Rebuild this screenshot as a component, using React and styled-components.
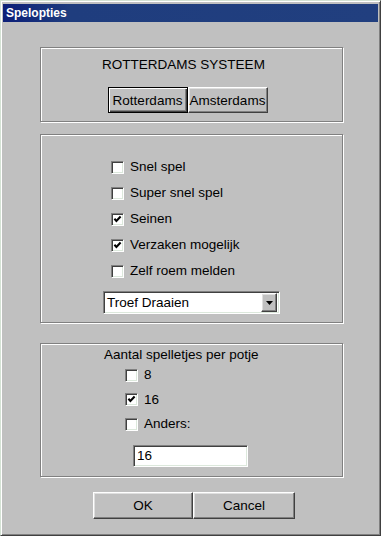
import styled, { createGlobalStyle, css } from "styled-components"

const GlobalStyle = createGlobalStyle`
    html, body {
        margin: 0;
        padding: 0;
        background: #c0c0c0;
    }
    * {
        box-sizing: border-box;
    }
`

const raised = css`
    border: 1px solid;
    border-color: #ffffff #404040 #404040 #ffffff;
    box-shadow: inset -1px -1px 0 #808080, inset 1px 1px 0 #dfdfdf;
`

const sunken = css`
    border: 1px solid;
    border-color: #808080 #ffffff #ffffff #808080;
    box-shadow: inset 1px 1px 0 #404040, inset -1px -1px 0 #dce8dc;
`

function CheckBox({ label, checked }) {
    return (
        <CheckRow>
            <Box>
                {checked && (
                    <svg width="9" height="9" viewBox="0 0 9 9">
                        <polyline points="1.4,3.8 3.4,5.9 7.6,1.6" fill="none" stroke="#000" strokeWidth="2.1" />
                    </svg>
                )}
            </Box>
            <Label>{label}</Label>
        </CheckRow>
    )
}

export default function App() {
    return (
        <Window>
            <GlobalStyle />
            <TitleBar>Spelopties</TitleBar>
            <Content>
                <Group $height={75}>
                    <Heading>ROTTERDAMS SYSTEEM</Heading>
                    <SystemRow>
                        <Button $default $width={80} $height={26}>
                            Rotterdams
                        </Button>
                        <Button $width={80} $height={26}>
                            Amsterdams
                        </Button>
                    </SystemRow>
                </Group>
                <Group $height={189} $gap={12}>
                    <Options>
                        <CheckBox label="Snel spel" />
                        <CheckBox label="Super snel spel" />
                        <CheckBox label="Seinen" checked />
                        <CheckBox label="Verzaken mogelijk" checked />
                        <CheckBox label="Zelf roem melden" />
                    </Options>
                    <Select>
                        <SelectText>Troef Draaien</SelectText>
                        <ArrowButton>
                            <svg width="7" height="4" viewBox="0 0 7 4">
                                <polygon points="0,0 7,0 3.5,4" fill="#000" />
                            </svg>
                        </ArrowButton>
                    </Select>
                </Group>
                <Group $height={134} $gap={20}>
                    <SubHeading>Aantal spelletjes per potje</SubHeading>
                    <CountOptions>
                        <CheckBox label="8" />
                        <CheckBox label="16" checked />
                        <CheckBox label="Anders:" />
                        <TextField>16</TextField>
                    </CountOptions>
                </Group>
                <Footer>
                    <Button $width={100} $height={27}>
                        OK
                    </Button>
                    <Button $width={102} $height={27}>
                        Cancel
                    </Button>
                </Footer>
            </Content>
        </Window>
    )
}

const Window = styled.div`
    width: 381px;
    height: 536px;
    padding: 2px;
    background: #c0c0c0;
    border: 1px solid;
    border-color: #d4e2d4 #404040 #404040 #d4e2d4;
    box-shadow: inset 1px 1px 0 #ffffff, inset -1px -1px 0 #808080;
    font-family: "Liberation Sans", Arial, sans-serif;
    font-size: 13.5px;
    color: #000;
    display: flex;
    flex-direction: column;
`

const TitleBar = styled.div`
    height: 18px;
    margin-top: 1px;
    padding-left: 3px;
    background: linear-gradient(to right, #0c1f78 0%, #1f3d7e 18%, #213f7f 100%);
    color: #ffffff;
    font-weight: bold;
    font-size: 12px;
    line-height: 18px;
`

const Content = styled.div`
    flex: 1;
    display: flex;
    flex-direction: column;
    padding: 25px 0 0 37px;
`

const Group = styled.div`
    width: 303px;
    height: ${(p) => p.$height}px;
    margin-top: ${(p) => p.$gap || 0}px;
    border: 1px solid #808080;
    box-shadow: 1px 1px 0 #ffffff, inset 1px 1px 0 #ffffff;
    display: flex;
    flex-direction: column;
`

const Heading = styled.div`
    margin-top: 9px;
    padding-right: 16px;
    text-align: center;
    line-height: 16px;
`

const SystemRow = styled.div`
    display: flex;
    justify-content: center;
    margin-top: 14px;
    padding-right: 8px;
`

const Button = styled.div`
    width: ${(p) => p.$width}px;
    height: ${(p) => p.$height}px;
    display: flex;
    align-items: center;
    justify-content: center;
    background: #c0c0c0;
    ${raised}
    ${(p) =>
        p.$default &&
        css`
            border: 1px solid #000;
            box-shadow: inset 1px 1px 0 #ffffff, inset -1px -1px 0 #404040, inset -2px -2px 0 #808080;
        `}
`

const Options = styled.div`
    display: flex;
    flex-direction: column;
    padding: 19px 0 0 70px;
`

const CheckRow = styled.div`
    height: 26px;
    display: flex;
    align-items: center;
    gap: 6px;
`

const Box = styled.div`
    width: 13px;
    height: 13px;
    background: #ffffff;
    ${sunken}
    display: flex;
    align-items: center;
    justify-content: center;
`

const Label = styled.span`
    line-height: 16px;
`

const Select = styled.div`
    width: 177px;
    height: 23px;
    margin: 7px 0 0 62px;
    background: #ffffff;
    ${sunken}
    display: flex;
    align-items: center;
    padding: 0 2px 0 3px;
`

const SelectText = styled.span`
    flex: 1;
`

const ArrowButton = styled.div`
    width: 16px;
    height: 19px;
    background: #c0c0c0;
    ${raised}
    display: flex;
    align-items: center;
    justify-content: center;
`

const SubHeading = styled.div`
    margin: 3px 0 0 63px;
    line-height: 16px;
`

const CountOptions = styled.div`
    display: flex;
    flex-direction: column;
    padding: 0 0 0 84px;
    & > ${CheckRow} {
        height: 24.5px;
    }
`

const TextField = styled.div`
    width: 115px;
    height: 22px;
    margin: 8px 0 0 8px;
    background: #ffffff;
    ${sunken}
    line-height: 20px;
    padding-left: 3px;
`

const Footer = styled.div`
    display: flex;
    margin-top: 15px;
    padding-left: 53px;
`
